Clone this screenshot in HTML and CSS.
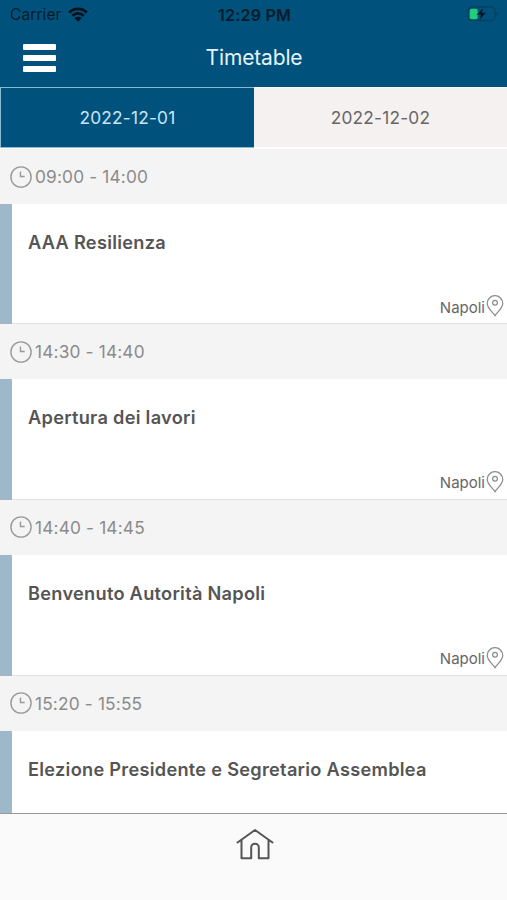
FILE: index.html
```html
<!DOCTYPE html>
<html lang="it">
<head>
<meta charset="utf-8">
<title>Timetable</title>
<link rel="stylesheet" href="styles.css">
</head>
<body>
<svg class="defs" width="0" height="0" aria-hidden="true">
  <symbol id="clock" viewBox="0 0 22 22"><circle cx="11" cy="11" r="10.1"/><path d="M10.500 5.500v5h4.200"/></symbol>
  <symbol id="pin" viewBox="0 0 18 22"><path d="M9 20.600C7.200 17.600 1.200 13.200 1.200 8.500a7.800 7.800 0 0 1 15.600 0C16.800 13.200 10.800 17.600 9 20.600Z"/><circle cx="9" cy="7.800" r="2.400"/></symbol>
</svg>
<div class="app">
  <header class="header">
    <div class="status">
      <div class="carrier"><span>Carrier</span>
        <svg class="wifi" viewBox="0 0 20 15"><path d="M1.200 5.500a12.500 12.500 0 0 1 17.600 0M4.300 8.700a8 8 0 0 1 11.400 0"/><path class="dot" d="M6.400 11.100a5.200 5.200 0 0 1 7.200 0L10 14.800Z"/></svg>
      </div>
      <div class="clock-time">12:29 PM</div>
      <svg class="battery" viewBox="0 0 32 16"><rect class="shell" x="1" y="1" width="27" height="13.500" rx="4"/><rect class="charge" x="2.700" y="2.700" width="8" height="10.500" rx="2"/><path class="cap" d="M29.700 5.200v5q1.800-.6 1.800-2.500t-1.800-2.500Z"/><path class="bolt" d="M16.300 1.700 9.800 8.800h4L12.500 14l6.600-7.300h-4Z"/></svg>
    </div>
    <div class="nav">
      <div class="menu"><i></i><i></i><i></i></div>
      <h1>Timetable</h1>
    </div>
  </header>
  <nav class="tabs"><div class="tab active">2022-12-01</div><div class="tab">2022-12-02</div></nav>
  <main class="list">
    <section class="slot">
      <div class="time"><svg><use href="#clock"/></svg><span>09:00 - 14:00</span></div>
      <article class="card"><h2>AAA Resilienza</h2><div class="place"><span>Napoli</span><svg><use href="#pin"/></svg></div></article>
    </section>
    <section class="slot">
      <div class="time"><svg><use href="#clock"/></svg><span>14:30 - 14:40</span></div>
      <article class="card"><h2>Apertura dei lavori</h2><div class="place"><span>Napoli</span><svg><use href="#pin"/></svg></div></article>
    </section>
    <section class="slot">
      <div class="time"><svg><use href="#clock"/></svg><span>14:40 - 14:45</span></div>
      <article class="card"><h2>Benvenuto Autorità Napoli</h2><div class="place"><span>Napoli</span><svg><use href="#pin"/></svg></div></article>
    </section>
    <section class="slot">
      <div class="time"><svg><use href="#clock"/></svg><span>15:20 - 15:55</span></div>
      <article class="card"><h2>Elezione Presidente e Segretario Assemblea</h2></article>
    </section>
  </main>
  <footer class="footer">
    <svg class="home" viewBox="0 0 38 34"><path d="M1.500 15.500 19 3l17.500 12.500M5.500 13v18.300h9.700V20.500a3.800 3.800 0 0 1 7.600 0v10.800h9.700V13"/></svg>
  </footer>
</div>
</body>
</html>
```
FILE: styles.css
```css
* { box-sizing: border-box; }
body { margin: 0; font-family: Inter, "Liberation Sans", sans-serif; background: #fff; }
h1, h2 { margin: 0; }
svg { display: block; flex: none; }
.defs { position: absolute; }
.app { width: 507px; height: 900px; display: flex; flex-direction: column; overflow: hidden; }

.header { height: 87px; flex: none; background: #00527c; }
.status { height: 29px; display: grid; grid-template-columns: 1fr auto 1fr; align-items: center; padding: 0 8px 0 10px; color: #061c2b; }
.carrier { display: flex; align-items: center; gap: 6px; font-size: 15.5px; letter-spacing: 0.1px; }
.wifi { width: 20px; height: 15px; fill: none; stroke: #04131e; stroke-width: 2.7; }
.wifi .dot { fill: #04131e; stroke: none; }
.clock-time { font-size: 16px; font-weight: 600; letter-spacing: 0.25px; }
.battery { width: 32px; height: 16px; justify-self: end; margin-bottom: 1px; }
.shell { fill: none; stroke: #08405f; stroke-width: 1.3; }
.charge { fill: #20ce78; }
.cap { fill: #08405f; }
.bolt { fill: #04131e; stroke: #00527c; stroke-width: .5; }
.nav { height: 58px; display: grid; grid-template-columns: 1fr auto 1fr; align-items: center; padding: 0 22px 1px 23px; }
.menu { width: 33px; display: grid; gap: 5px; }
.menu i { height: 6px; background: #fff; border-radius: 1px; }
.nav h1 { color: #e5f2fc; font-size: 21px; font-weight: 400; letter-spacing: -0.15px; }

.tabs { height: 62px; flex: none; display: grid; grid-template-columns: 254px 1fr; border-bottom: 1px solid #fff; }
.tab { display: flex; align-items: center; justify-content: center; background: #f5f1f0; color: #666; font-size: 17.3px; letter-spacing: 0.2px; border: solid #fff; border-width: 1px 0; }
.tab.active { background: #00527c; color: #c9e5f7; border: 1px solid #8ab9d1; border-right: 0; }

.list { flex: 1; min-height: 0; overflow: hidden; }
.slot { height: 175.75px; }
.slot:first-child { height: 175.2px; }
.time { height: 55px; display: flex; align-items: center; gap: 3px; padding-left: 10px; background: #f4f4f4; color: #8b8b8b; font-size: 17.3px; letter-spacing: 0.16px; }
.time svg { width: 22px; height: 22px; fill: none; stroke: #999; stroke-width: 1.4; }
.card { height: calc(100% - 55px); display: flex; flex-direction: column; justify-content: space-between; padding: 26px 3px 7px 16px; border-left: 12px solid #9db9c9; background: linear-gradient(#e0e0e0, #e0e0e0) bottom / 100% 1px no-repeat; }
.card h2 { font-size: 18.2px; line-height: 24px; font-weight: 600; letter-spacing: 0.28px; color: #555; white-space: nowrap; }
.place { display: flex; align-items: center; justify-content: flex-end; gap: 1px; font-size: 15px; color: #666; }
.place span { padding-top: 2px; }
.place svg { width: 18px; height: 22px; fill: none; stroke: #8a8a8a; stroke-width: 1.2; }

.footer { height: 87px; flex: none; display: flex; justify-content: center; align-items: flex-start; padding-top: 13px; background: #fafafa; border-top: 1px solid #999; }
.home { width: 38px; height: 34px; margin-left: 2px; fill: none; stroke: #555; stroke-width: 2; stroke-linecap: round; stroke-linejoin: round; }
```
